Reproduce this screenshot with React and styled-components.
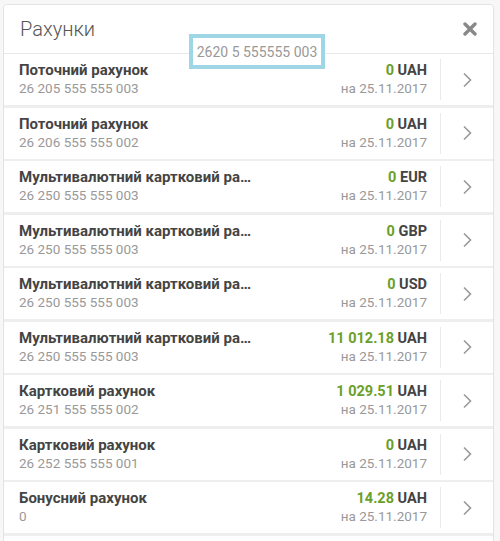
import React from 'react'
import styled, { createGlobalStyle } from 'styled-components'

const GlobalStyle = createGlobalStyle`
    html, body {
        margin: 0;
        padding: 0;
        background: #f7f7f7;
        font-family: Roboto, "Liberation Sans", Arial, sans-serif;
    }
`

const Page = styled.div`
    position: relative;
    padding: 4px 6px 0 3px;
    height: 541px;
    overflow: hidden;
    box-sizing: border-box;
`

const Card = styled.div`
    background: #eeeeee;
    border: 1px solid #e3e3e3;
    border-radius: 4px 4px 0 0;
    overflow: hidden;
`

const Header = styled.div`
    display: flex;
    align-items: center;
    justify-content: space-between;
    height: 48px;
    padding: 0 16px 0 16px;
    background: #fff;
    border-bottom: 1px solid #e8e8e8;
`

const Title = styled.h2`
    margin: 0;
    font-size: 20px;
    font-weight: 300;
    color: #555;
`

const Close = styled.button`
    border: 0;
    background: none;
    padding: 0;
    display: flex;
    cursor: pointer;
`

const List = styled.div`
    display: flex;
    flex-direction: column;
    gap: 2.5px;
`

const Row = styled.div`
    display: flex;
    align-items: stretch;
    height: 51px;
    background: #fff;
`

const Info = styled.div`
    display: flex;
    flex-direction: column;
    justify-content: center;
    width: 235px;
    padding-left: 15px;
    min-width: 0;
`

const Name = styled.div`
    font-size: 15px;
    line-height: 17px;
    font-weight: 700;
    color: #444;
    white-space: nowrap;
    overflow: hidden;
    text-overflow: ellipsis;
`

const Sub = styled.div`
    font-size: 13.5px;
    line-height: 18px;
    color: #999;
    white-space: nowrap;
`

const Balance = styled.div`
    flex: 1;
    display: flex;
    flex-direction: column;
    justify-content: center;
    align-items: flex-end;
    padding-right: 13px;
`

const Amount = styled.div`
    font-size: 14.5px;
    line-height: 17px;
    font-weight: 700;
    color: #444;
`

const Value = styled.span`
    color: #6b9f2a;
`

const Go = styled.div`
    width: 52px;
    display: flex;
    align-items: center;
    justify-content: center;
    margin: 5px 0;
    border-left: 1px solid #eaeaea;
`

const Tooltip = styled.div`
    position: absolute;
    left: 189px;
    top: 34px;
    width: 136px;
    height: 35px;
    box-sizing: border-box;
    border: 4px solid #9fd6e6;
    background: #fff;
    display: flex;
    align-items: center;
    justify-content: center;
    font-size: 14px;
    color: #999;
`

const accounts = [
    { name: 'Поточний рахунок', num: '26 205 555 555 003', value: '0', cur: 'UAH' },
    { name: 'Поточний рахунок', num: '26 206 555 555 002', value: '0', cur: 'UAH' },
    { name: 'Мультивалютний картковий рахунок', num: '26 250 555 555 003', value: '0', cur: 'EUR' },
    { name: 'Мультивалютний картковий рахунок', num: '26 250 555 555 003', value: '0', cur: 'GBP' },
    { name: 'Мультивалютний картковий рахунок', num: '26 250 555 555 003', value: '0', cur: 'USD' },
    { name: 'Мультивалютний картковий рахунок', num: '26 250 555 555 003', value: '11 012.18', cur: 'UAH' },
    { name: 'Картковий рахунок', num: '26 251 555 555 002', value: '1 029.51', cur: 'UAH' },
    { name: 'Картковий рахунок', num: '26 252 555 555 001', value: '0', cur: 'UAH' },
    { name: 'Бонусний рахунок', num: '0', value: '14.28', cur: 'UAH' },
    { name: 'Бонусний рахунок', num: '0', value: '0', cur: 'UAH' },
]

const Chevron = () => (
    <svg width="10" height="16" viewBox="0 0 10 16">
        <path d="M2 1.5 L8.5 8 L2 14.5" fill="none" stroke="#999" strokeWidth="1.6" />
    </svg>
)

const Cross = () => (
    <svg width="14" height="14" viewBox="0 0 14 14">
        <path d="M2 2 L12 12 M12 2 L2 12" stroke="#888" strokeWidth="3.4" strokeLinecap="round" />
    </svg>
)

const App = () => (
    <Page>
        <GlobalStyle />
        <Card>
            <Header>
                <Title>Рахунки</Title>
                <Close aria-label="Закрити">
                    <Cross />
                </Close>
            </Header>
            <List>
                {accounts.map((a, i) => (
                    <Row key={i}>
                        <Info>
                            <Name>{a.name}</Name>
                            <Sub>{a.num}</Sub>
                        </Info>
                        <Balance>
                            <Amount>
                                <Value>{a.value}</Value> {a.cur}
                            </Amount>
                            <Sub>на 25.11.2017</Sub>
                        </Balance>
                        <Go>
                            <Chevron />
                        </Go>
                    </Row>
                ))}
            </List>
        </Card>
        <Tooltip>2620 5 555555 003</Tooltip>
    </Page>
)

export default App
